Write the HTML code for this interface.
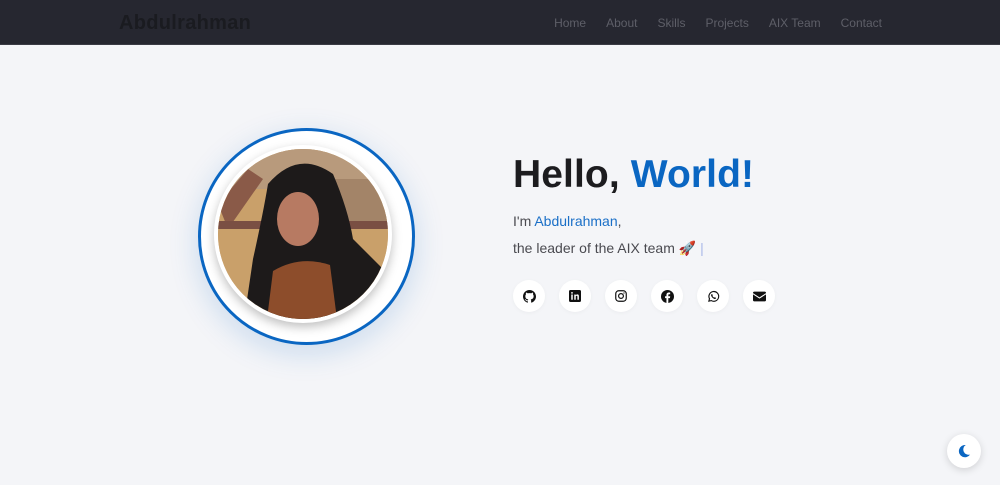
<!DOCTYPE html>
<html><head><style>
*{margin:0;padding:0;box-sizing:border-box}
body{width:1000px;height:485px;background:#f4f5f8;font-family:"Liberation Sans",sans-serif;position:relative;overflow:hidden}
nav{position:absolute;left:0;top:0;width:1000px;height:45px;background:#262730;border-bottom:1px solid #3a3b44}
.logo{position:absolute;left:119px;top:12px;font-size:20px;font-weight:bold;color:#1a1b20;letter-spacing:0.3px}
.links{position:absolute;right:118px;top:16px;font-size:12px;color:#5e5f68}
.links span{margin-left:20px}
.ring{position:absolute;left:198px;top:128px;width:217px;height:217px;border-radius:50%;border:3px solid #0a66c2;background:#fff;box-shadow:0 8px 30px rgba(10,102,194,.18)}
.photo{position:absolute;left:214px;top:145px;width:178px;height:178px;border-radius:50%;border:4px solid #fff;box-shadow:0 4px 10px rgba(0,0,0,.25);overflow:hidden;background:#c9a472}
h1{position:absolute;left:513px;top:153px;font-size:39px;font-weight:bold;color:#1c1c1f;letter-spacing:0.1px}
h1 b{color:#0a66c2}
.p1{position:absolute;left:513px;top:213px;font-size:14px;color:#4a4a50}
.p1 span{color:#1a6fc7}
.p2{position:absolute;left:513px;top:240px;font-size:14px;color:#4a4a50}
.soc{position:absolute;top:280px;width:32px;height:32px;border-radius:50%;background:#fff;display:flex;align-items:center;justify-content:center;box-shadow:0 1px 4px rgba(0,0,0,.04)}
.moon{position:absolute;left:947px;top:434px;width:34px;height:34px;border-radius:50%;background:#fff;box-shadow:0 2px 8px rgba(0,0,0,.15);display:flex;align-items:center;justify-content:center}
</style></head><body>
<nav><div class="logo">Abdulrahman</div>
<div class="links"><span>Home</span><span>About</span><span>Skills</span><span>Projects</span><span>AIX Team</span><span>Contact</span></div></nav>
<div class="ring"></div>
<div class="photo"><svg width="178" height="178" viewBox="0 0 178 178">
<rect width="178" height="178" fill="#c9a06a"/>
<rect width="178" height="40" fill="#b89a7c"/>
<polygon points="0,55 30,20 45,30 10,80" fill="#8a5a48"/>
<rect x="110" y="30" width="68" height="45" fill="#a38468"/>
<rect x="0" y="72" width="178" height="8" fill="#7a4f43"/>
<path d="M25,178 L35,110 Q45,65 50,35 Q80,0 115,25 Q130,60 135,90 L165,120 L175,178Z" fill="#1d1a1a"/>
<ellipse cx="80" cy="70" rx="21" ry="27" fill="#b77a62"/>
<path d="M48,178 L55,122 Q82,106 112,116 L120,178Z" fill="#8d4d2b"/>
</svg></div>
<h1>Hello, <b>World!</b></h1>
<div class="p1">I'm <span>Abdulrahman</span>,</div>
<div class="p2">the leader of the AIX team 🚀 <span style="color:#a8b8e8">|</span></div>
<div class="soc" style="left:513px"><svg width="13" height="13" viewBox="0 0 16 16"><path fill="#111" d="M8 0C3.6 0 0 3.6 0 8c0 3.5 2.3 6.5 5.5 7.6.4.1.5-.2.5-.4v-1.4c-2.2.5-2.7-1-2.7-1-.4-.9-.9-1.2-.9-1.2-.7-.5.1-.5.1-.5.8.1 1.200.8 1.2.8.7 1.3 1.9.9 2.3.7.1-.5.3-.9.5-1.1-1.8-.2-3.6-.9-3.6-4 0-.9.3-1.6.8-2.100-.1-.2-.4-1 .1-2.1 0 0 .7-.2 2.2.8.6-.2 1.3-.3 2-.3s1.4.1 2 .3c1.5-1 2.2-.8 2.2-.8.4 1.1.2 1.9.1 2.1.5.6.8 1.3.8 2.1 0 3.1-1.9 3.7-3.6 3.9.3.3.5.8.5 1.5v2.2c0 .2.1.5.6.4C13.7 14.5 16 11.5 16 8c0-4.4-3.6-8-8-8z"/></svg></div>
<div class="soc" style="left:559px"><svg width="12" height="12" viewBox="0 0 16 16"><rect width="16" height="16" rx="2" fill="#111"/><rect x="3" y="6" width="2" height="7" fill="#fff"/><circle cx="4" cy="3.8" r="1.2" fill="#fff"/><path d="M7 6h2v1c.5-.8 1.3-1.2 2.2-1.2 1.6 0 2 1 2 2.6V13h-2V9c0-.8-.2-1.4-1-1.4S9 8.2 9 9v4H7z" fill="#fff"/></svg></div>
<div class="soc" style="left:605px"><svg width="12" height="12" viewBox="0 0 16 16"><rect x="1" y="1" width="14" height="14" rx="4" fill="none" stroke="#111" stroke-width="1.6"/><circle cx="8" cy="8" r="3.2" fill="none" stroke="#111" stroke-width="1.6"/><circle cx="12" cy="4" r=".9" fill="#111"/></svg></div>
<div class="soc" style="left:651px"><svg width="13" height="13" viewBox="0 0 16 16"><circle cx="8" cy="8" r="8" fill="#111"/><path d="M9 16V10h2l.3-2.3H9V6.3c0-.7.2-1.1 1.1-1.1h1.2V3.1c-.2 0-.9-.1-1.7-.1-1.7 0-2.9 1-2.9 2.9v1.8H5V10h1.7v6z" fill="#fff"/></svg></div>
<div class="soc" style="left:697px"><svg width="13" height="13" viewBox="0 0 16 16"><path d="M2.3 13.7l.8-3A6 6 0 1 1 5.3 13z" fill="none" stroke="#111" stroke-width="1.4"/><path d="M5.6 5.2c.3-.4.7-.3.9 0l.6 1.3c.1.3-.2.6-.4.8.4.9 1.2 1.7 2.1 2.1.2-.2.5-.6.8-.5l1.3.6c.3.2.3.6 0 .9-.6.7-1.4.8-2.4.3-1.6-.7-2.8-2-3.4-3.6-.2-.8 0-1.4.5-1.900z" fill="#111"/></svg></div>
<div class="soc" style="left:743px"><svg width="13" height="11" viewBox="0 0 16 12"><path d="M0 1.5C0 .7.7 0 1.5 0h13c.8 0 1.5.7 1.5 1.5v.3L8 7 0 1.8z" fill="#111"/><path d="M0 3.4l8 5.2 8-5.2v7.1c0 .8-.7 1.5-1.5 1.5h-13C.7 12 0 11.3 0 10.5z" fill="#111"/></svg></div>
<div class="moon"><svg width="14" height="14" viewBox="0 0 16 16"><path d="M10 1.2A7 7 0 1 0 15 12 6 6 0 0 1 10 1.2z" fill="#0a66c2"/></svg></div>
</body></html>
